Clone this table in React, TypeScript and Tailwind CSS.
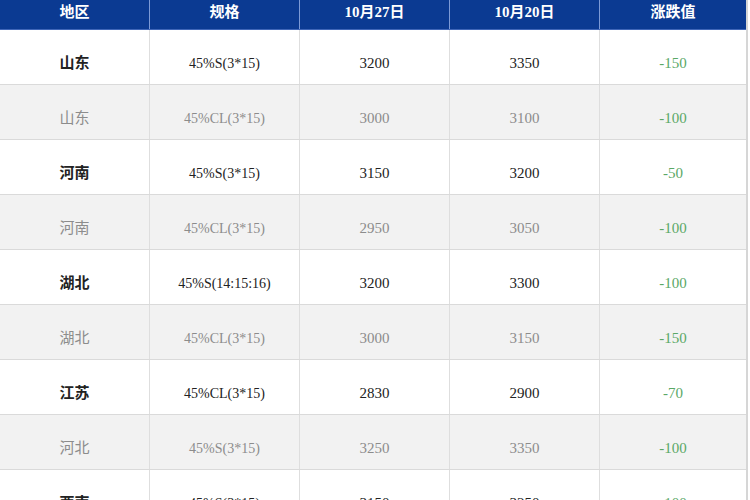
const rows = [
  { region: "山东", spec: "45%S(3*15)", a: "3200", b: "3350", diff: "-150" },
  { region: "山东", spec: "45%CL(3*15)", a: "3000", b: "3100", diff: "-100" },
  { region: "河南", spec: "45%S(3*15)", a: "3150", b: "3200", diff: "-50" },
  { region: "河南", spec: "45%CL(3*15)", a: "2950", b: "3050", diff: "-100" },
  { region: "湖北", spec: "45%S(14:15:16)", a: "3200", b: "3300", diff: "-100" },
  { region: "湖北", spec: "45%CL(3*15)", a: "3000", b: "3150", diff: "-150" },
  { region: "江苏", spec: "45%CL(3*15)", a: "2830", b: "2900", diff: "-70" },
  { region: "河北", spec: "45%S(3*15)", a: "3250", b: "3350", diff: "-100" },
  { region: "西南", spec: "45%S(3*15)", a: "3150", b: "3250", diff: "-100" },
]

const headers = ["地区", "规格", "10月27日", "10月20日", "涨跌值"]

export default function App() {
  return (
    <div
      className="w-[750px] h-[500px] overflow-hidden bg-white"
      style={{ fontFamily: '"Liberation Serif", "Noto Sans CJK SC", serif' }}
    >
      <div className="w-[748px] border-r-2 border-[#d6d6d6]">
        <div className="grid grid-cols-[150px_150px_150px_150px_146px] h-[30px] bg-[#0b3a92] border-b border-[#3f66b8]">
          {headers.map((h, i) => (
            <div
              key={h}
              className={`flex items-center justify-center pb-[4px] text-white text-[15px] font-bold ${i < 4 ? "border-r border-[#7d9ad6]" : ""}`}
            >
              {h}
            </div>
          ))}
        </div>

        {rows.map((r, idx) => {
          const gray = idx % 2 === 1
          const text = gray ? "text-[#8c8c8c]" : "text-[#222222]"
          const cell = `flex items-center justify-center pt-[12px] border-r border-[#dedede] ${text}`
          return (
            <div
              key={idx}
              className={`grid grid-cols-[150px_150px_150px_150px_146px] h-[55px] border-b border-[#dadada] ${gray ? "bg-[#f2f2f2]" : "bg-white"}`}
            >
              <div className={`${cell} text-[15px] ${gray ? "" : "font-bold"}`}>{r.region}</div>
              <div className={`${cell} text-[14px]`}>{r.spec}</div>
              <div className={`${cell} text-[15px]`}>{r.a}</div>
              <div className={`${cell} text-[15px]`}>{r.b}</div>
              <div className="flex items-center justify-center pt-[12px] text-[15px] text-[#5aa866]">{r.diff}</div>
            </div>
          )
        })}
      </div>
    </div>
  )
}
